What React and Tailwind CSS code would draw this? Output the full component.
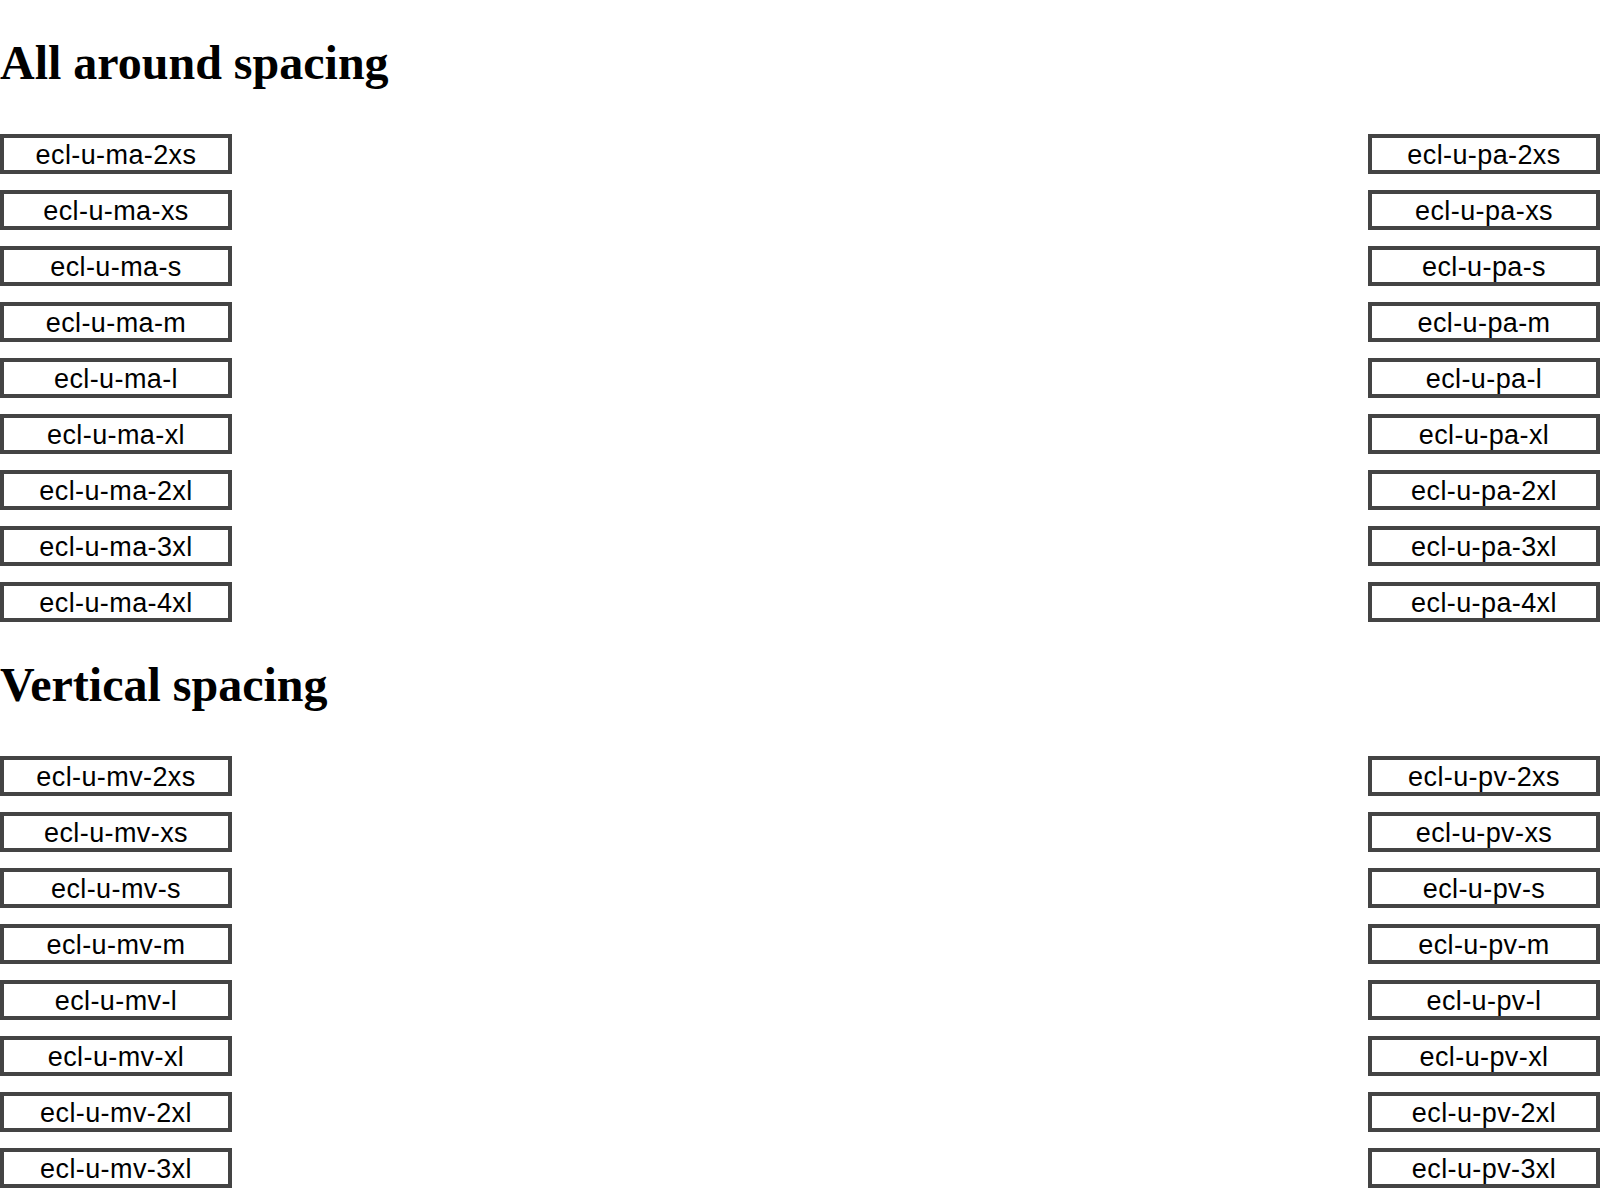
const sizes = ['2xs', 'xs', 's', 'm', 'l', 'xl', '2xl', '3xl', '4xl'];

const sections = [
  { title: 'All around spacing', left: 'ma', right: 'pa', items: sizes },
  { title: 'Vertical spacing', left: 'mv', right: 'pv', items: sizes.slice(0, 8) },
];

const Box = ({ label }) => (
  <div className="w-[232px] h-[40px] border-4 border-[#444444] bg-white text-center text-black text-[27px] leading-[30px] pt-[2px] tracking-[0.4px] font-['Liberation_Sans',Arial,sans-serif]">
    {label}
  </div>
);

const App = () => {
  return (
    <div className="min-h-screen bg-white pt-[36px]">
      {sections.map((section, i) => (
        <section key={section.title} className={i > 0 ? 'mt-[36px]' : ''}>
          <h1 className="text-[48px] leading-[53px] font-bold text-black font-['Liberation_Serif','Times_New_Roman',serif]">
            {section.title}
          </h1>

          <div className="mt-[45px] flex justify-between">
            <div className="flex flex-col gap-4">
              {section.items.map((size) => (
                <Box key={size} label={`ecl-u-${section.left}-${size}`} />
              ))}
            </div>
            <div className="flex flex-col gap-4">
              {section.items.map((size) => (
                <Box key={size} label={`ecl-u-${section.right}-${size}`} />
              ))}
            </div>
          </div>
        </section>
      ))}
    </div>
  );
};

export default App;
